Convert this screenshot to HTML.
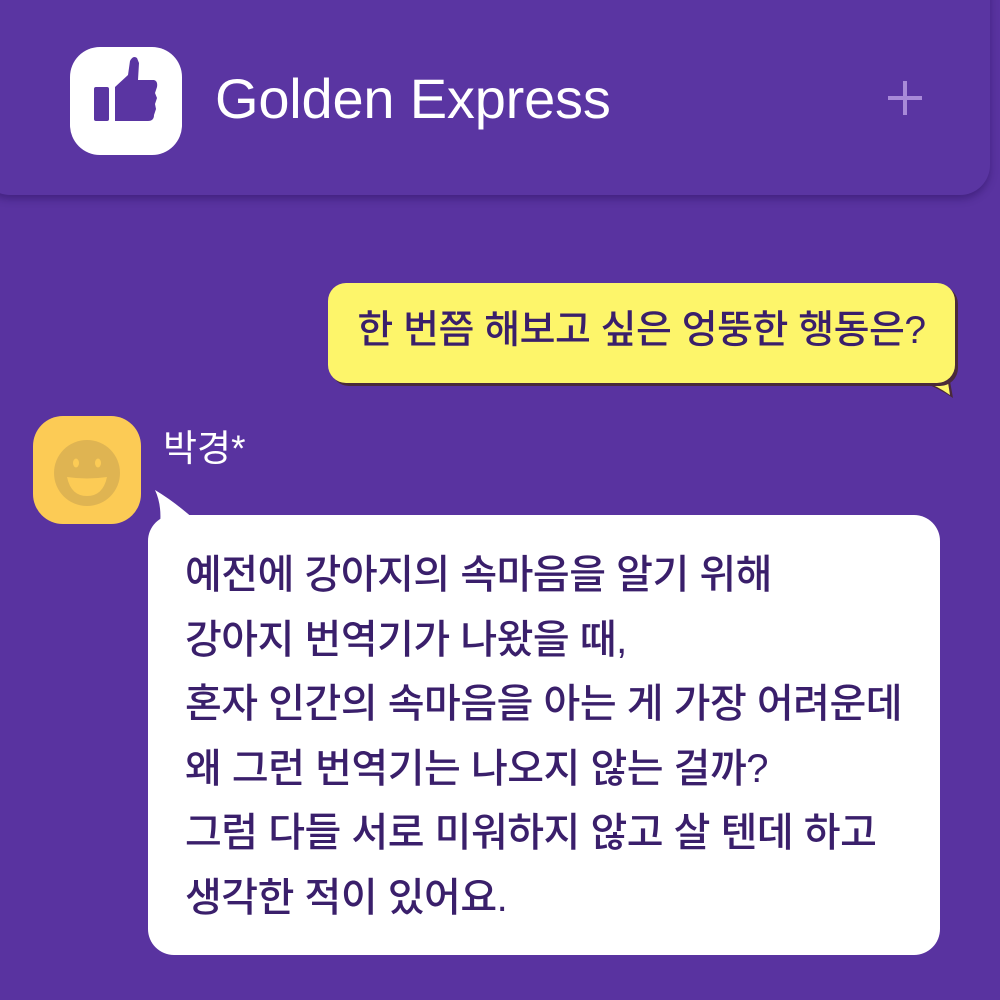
<!DOCTYPE html>
<html><head><meta charset="utf-8"><style>
body{margin:0;width:1000px;height:1000px;background:#5933a0;position:relative;overflow:hidden;font-family:"Liberation Sans","Noto Sans CJK KR",sans-serif;}
.hdr{position:absolute;left:-20px;top:-20px;width:1010px;height:215px;background:#5a35a2;border-radius:0 0 30px 30px;box-shadow:0 4px 8px rgba(40,15,90,.45);}
.logo{position:absolute;left:70px;top:47px;width:112px;height:108px;background:#fff;border-radius:30px;}
.title{position:absolute;left:215px;top:66px;color:#fff;font-size:56px;letter-spacing:-0.2px;font-family:"Liberation Sans",sans-serif;}
.plus{position:absolute;left:888px;top:81px;width:34px;height:34px;}
.plus:before{content:"";position:absolute;left:15px;top:0;width:4px;height:34px;background:#a88ad8;}
.plus:after{content:"";position:absolute;left:0;top:15px;width:34px;height:4px;background:#a88ad8;}
.q{position:absolute;left:328px;top:283px;width:627px;height:100px;background:#fdf56a;border-radius:18px;box-shadow:3px 3px 0 #4a2a3a;color:#3a1f6b;font-size:39px;line-height:96px;text-align:center;font-weight:500;letter-spacing:-0.5px;}
.av{position:absolute;left:33px;top:416px;width:108px;height:108px;background:#fccb55;border-radius:30px;}
.name{position:absolute;left:163px;top:418px;color:#fff;font-size:37px;}
.b{position:absolute;left:148px;top:515px;width:792px;height:440px;background:#fff;border-radius:26px;}
.txt{position:absolute;left:185px;top:543px;color:#3a1f6b;font-size:40px;line-height:64.5px;font-weight:500;letter-spacing:-0.5px;}
</style></head><body>
<div class="hdr"></div>
<div class="logo"><svg width="112" height="108" viewBox="0 0 112 108"><rect x="24" y="40" width="15" height="34" rx="2" fill="#5a35a2"/><path d="M45 40 L58 28 L60 14 Q63 8 67 11 L69 16 L68 33 L84 33 Q88 34 87 40 L85 46 L87 51 L85 57 L86 62 L84 68 Q84 74 78 74 L45 74 Z" fill="#5a35a2"/></svg></div>
<div class="title">Golden Express</div>
<div class="plus"></div>
<svg style="position:absolute;left:920px;top:370px" width="40" height="32"><path d="M2 0 L28 0 L33 28 Q18 18 2 12 Z" fill="#4a2a3a"/><path d="M0 0 L26 0 L30 25 Q16 15 0 10 Z" fill="#fdf56a"/></svg>
<div class="q">한 번쯤 해보고 싶은 엉뚱한 행동은?</div>
<div class="av"><svg width="108" height="108"><circle cx="54" cy="57" r="33" fill="#dfb452"/><ellipse cx="43" cy="47" rx="3" ry="4.5" fill="#fccb55"/><ellipse cx="65" cy="47" rx="3" ry="4.5" fill="#fccb55"/><path d="M34 61 Q54 64 74 61 Q70 80 54 80 Q38 80 34 61 Z" fill="#fccb55"/></svg></div>
<div class="name">박경*</div>
<svg style="position:absolute;left:150px;top:490px" width="50" height="40"><path d="M5 0 Q25 12 45 30 L10 35 Q12 15 5 0 Z" fill="#fff"/></svg>
<div class="b"></div>
<div class="txt">예전에 강아지의 속마음을 알기 위해<br>강아지 번역기가 나왔을 때,<br>혼자 인간의 속마음을 아는 게 가장 어려운데<br>왜 그런 번역기는 나오지 않는 걸까?<br>그럼 다들 서로 미워하지 않고 살 텐데 하고<br>생각한 적이 있어요.</div>
</body></html>
